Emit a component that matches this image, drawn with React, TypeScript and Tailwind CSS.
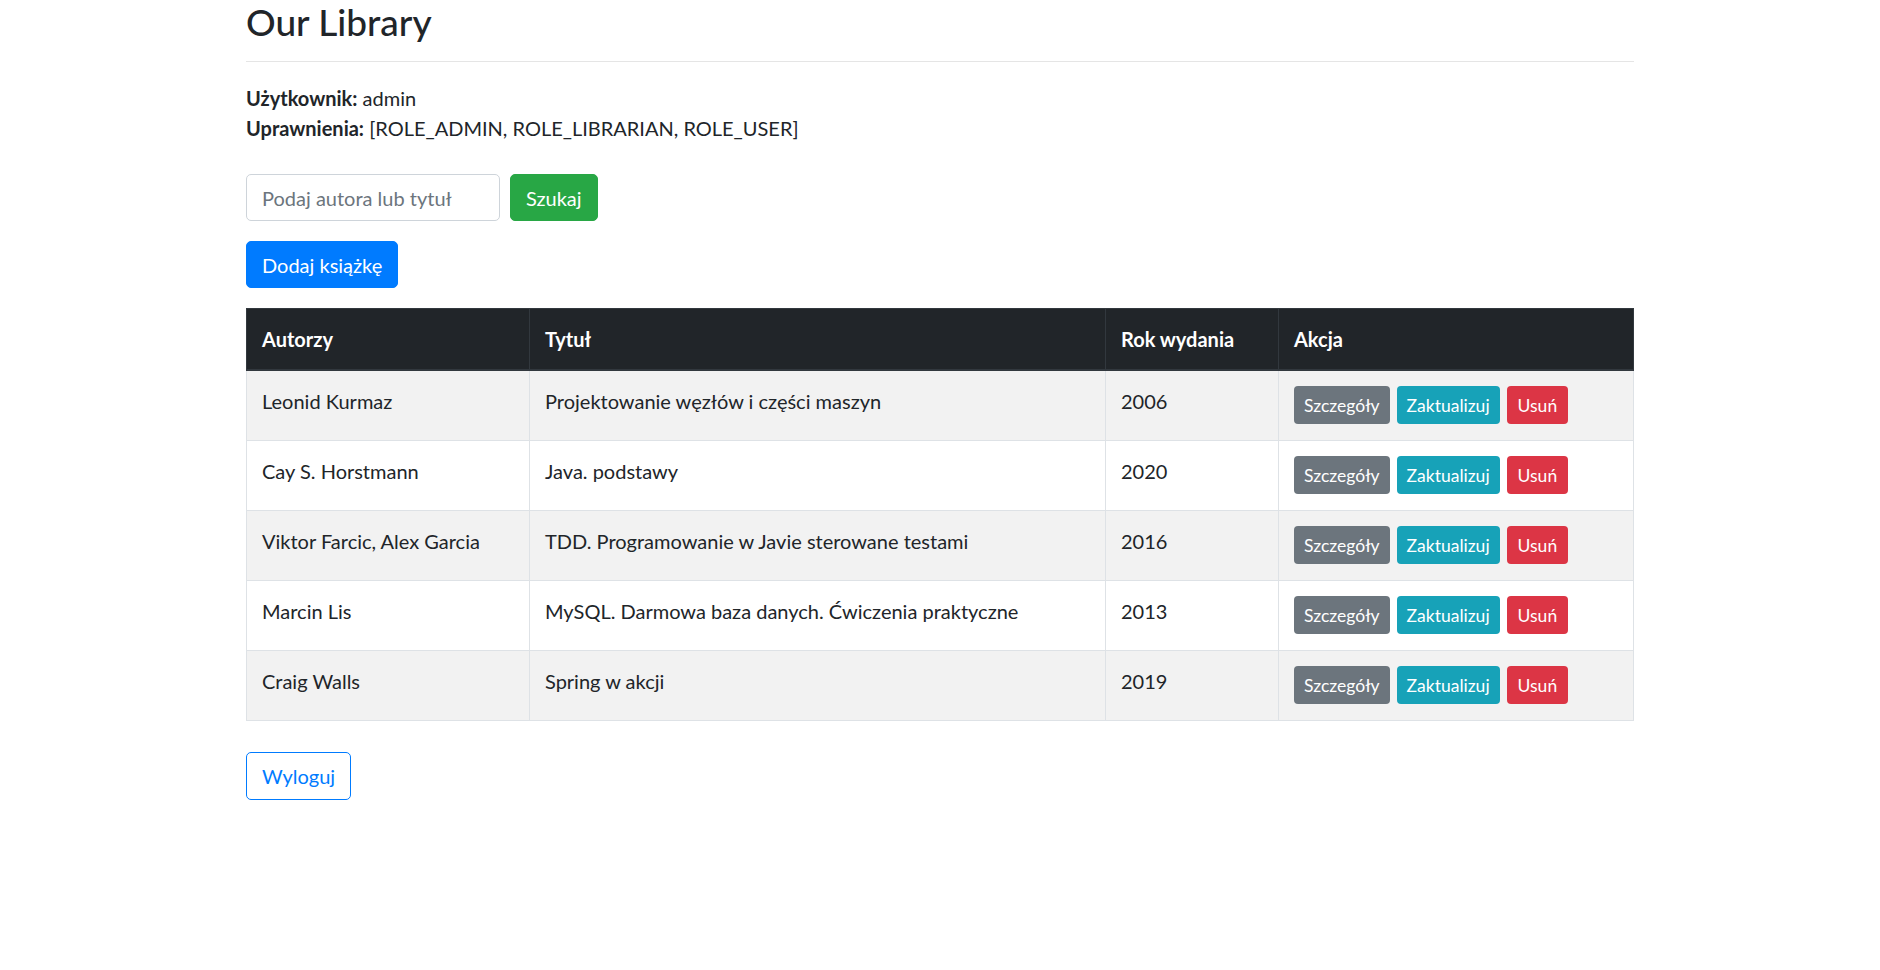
import React from 'react';

interface Book {
  authors: string;
  title: string;
  year: number;
}

const books: Book[] = [
  { authors: 'Leonid Kurmaz', title: 'Projektowanie węzłów i części maszyn', year: 2006 },
  { authors: 'Cay S. Horstmann', title: 'Java. podstawy', year: 2020 },
  { authors: 'Viktor Farcic, Alex Garcia', title: 'TDD. Programowanie w Javie sterowane testami', year: 2016 },
  { authors: 'Marcin Lis', title: 'MySQL. Darmowa baza danych. Ćwiczenia praktyczne', year: 2013 },
  { authors: 'Craig Walls', title: 'Spring w akcji', year: 2019 },
];

const App: React.FC = () => {
  return (
    <div className="min-h-[970px] bg-white text-[#212529] font-['Lato','Liberation_Sans',sans-serif] text-[20px] leading-[30px]">
      <div className="w-[1388px] mx-auto">
        {/* Header */}
        <h2 className="text-[37px] leading-[44px] font-medium">Our Library</h2>
        <hr className="mt-[17px] mb-[21px] border-0 border-t border-black/10" />

        {/* User info */}
        <div>
          <p><strong className="font-bold">Użytkownik:</strong> admin</p>
          <p><strong className="font-bold">Uprawnienia:</strong> [ROLE_ADMIN, ROLE_LIBRARIAN, ROLE_USER]</p>
        </div>

        {/* Search */}
        <form className="flex items-center gap-[10px] mt-[31px]" onSubmit={(e) => e.preventDefault()}>
          <input
            type="text"
            placeholder="Podaj autora lub tytuł"
            className="w-[254px] h-[47px] px-[15px] border border-[#ced4da] rounded-[5px] text-[20px] placeholder:text-[#6c757d] outline-none"
          />
          <button className="h-[47px] px-[15px] rounded-[5px] bg-[#28a745] border border-[#28a745] text-white">
            Szukaj
          </button>
        </form>

        <button className="mt-[20px] h-[47px] px-[15px] rounded-[5px] bg-[#007bff] border border-[#007bff] text-white">
          Dodaj książkę
        </button>

        {/* Books table */}
        <table className="mt-[20px] w-full border-collapse table-fixed">
          <colgroup>
            <col className="w-[283px]" />
            <col className="w-[576px]" />
            <col className="w-[173px]" />
            <col />
          </colgroup>
          <thead>
            <tr className="bg-[#212529] text-white text-left">
              <th className="px-[15px] py-[15px] font-bold border border-[#32383e] border-b-2">Autorzy</th>
              <th className="px-[15px] py-[15px] font-bold border border-[#32383e] border-b-2">Tytuł</th>
              <th className="px-[15px] py-[15px] font-bold border border-[#32383e] border-b-2">Rok wydania</th>
              <th className="px-[15px] py-[15px] font-bold border border-[#32383e] border-b-2">Akcja</th>
            </tr>
          </thead>
          <tbody>
            {books.map((b, i) => (
              <tr key={b.title} className={i % 2 === 0 ? 'bg-[#f2f2f2]' : 'bg-white'}>
                <td className="px-[15px] pt-[15px] pb-[24px] align-top border border-[#dee2e6]">{b.authors}</td>
                <td className="px-[15px] pt-[15px] pb-[24px] align-top border border-[#dee2e6]">{b.title}</td>
                <td className="px-[15px] pt-[15px] pb-[24px] align-top border border-[#dee2e6]">{b.year}</td>
                <td className="px-[15px] py-[15px] align-top border border-[#dee2e6]">
                  <div className="flex gap-[7px] text-[17.5px] leading-[26px]">
                    <button className="h-[38px] pt-[2px] px-[10px] rounded-[4px] bg-[#6c757d] text-white">Szczegóły</button>
                    <button className="h-[38px] pt-[2px] px-[10px] rounded-[4px] bg-[#17a2b8] text-white">Zaktualizuj</button>
                    <button className="h-[38px] pt-[2px] px-[11px] rounded-[4px] bg-[#dc3545] text-white">Usuń</button>
                  </div>
                </td>
              </tr>
            ))}
          </tbody>
        </table>

        <button className="mt-[31px] h-[48px] px-[15px] rounded-[5px] border border-[#007bff] text-[#007bff] bg-white">
          Wyloguj
        </button>
      </div>
    </div>
  );
};

export default App;
